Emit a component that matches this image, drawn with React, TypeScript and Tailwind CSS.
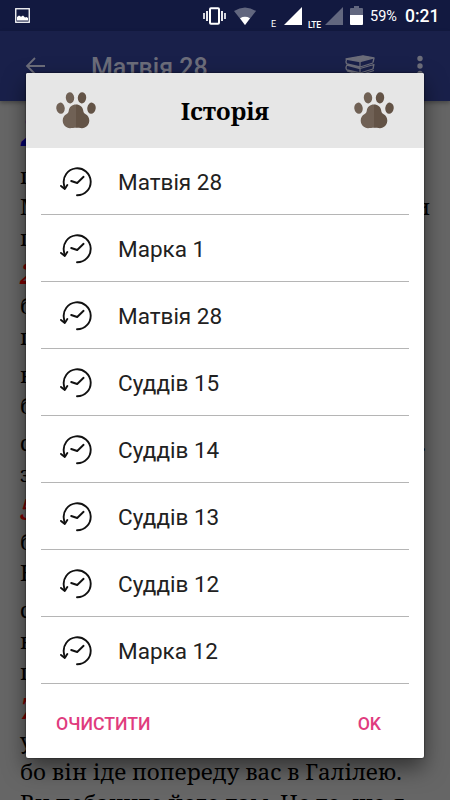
import { useState } from "react";

type Line = { text: string; end?: string; tone?: "red"; tall?: boolean };

const LINES: Line[] = [
  { text: "п" },
  { text: "М", end: "и" },
  { text: "п" },
  { text: "2", tone: "red", tall: true },
  { text: "б" },
  { text: "п" },
  { text: "в", tall: true },
  { text: "б" },
  { text: "с", end: ".", tall: true },
  { text: "з" },
  { text: "5", tone: "red", tall: true },
  { text: "б" },
  { text: "Н" },
  { text: "с", tall: true },
  { text: "в" },
  { text: "п" },
  { text: "7", tone: "red", tall: true },
  { text: "у" },
  { text: "бо він іде попереду вас в Галілею." },
  { text: "Ви побачите його там. Не то, що я" },
];

const HISTORY = [
  "Матвія 28",
  "Марка 1",
  "Матвія 28",
  "Суддів 15",
  "Суддів 14",
  "Суддів 13",
  "Суддів 12",
  "Марка 12",
];

function Paw() {
  return (
    <svg width="40" height="37" viewBox="0 0 40 37">
      <g fill="#706155">
        <ellipse cx="4.5" cy="16.2" rx="4.2" ry="5.6" transform="rotate(-8 4.5 16.2)" />
        <ellipse cx="14" cy="5.8" rx="4.2" ry="5.6" transform="rotate(-4 14 5.8)" />
        <path d="M20.200 12.500H20C16 12.500 13.300 15 12.800 18.500C12.500 20.500 12 21.300 10.300 22.200C8.200 23.400 6.700 25.700 6.700 28.600C6.700 33 10 36.200 14 36.200C16.400 36.200 17.800 35.800 20.200 35.800Z" />
      </g>
      <g fill="#635346">
        <ellipse cx="35.5" cy="16.2" rx="4.2" ry="5.6" transform="rotate(8 35.5 16.2)" />
        <ellipse cx="26" cy="5.8" rx="4.2" ry="5.6" transform="rotate(4 26 5.8)" />
        <path d="M20 12.500C24 12.500 26.700 15 27.200 18.500C27.500 20.500 28 21.300 29.700 22.200C31.800 23.400 33.300 25.700 33.300 28.600C33.300 33 30 36.200 26 36.200C23.600 36.200 22.200 35.800 20 35.800Z" />
      </g>
    </svg>
  );
}

function HistoryIcon() {
  return (
    <svg className="mt-px" width="32" height="30" viewBox="0 0 32 30" fill="none" stroke="#111" strokeWidth="1.9" strokeLinecap="round" strokeLinejoin="round">
      <path d="M17 28.300A13.500 13.500 0 1 0 3.900 17.200L4.600 21.400" />
      <path d="M1 18.900l3.800 3 2.500-3.900" />
      <path d="M11.200 14l6 2 6.400-6.200" />
    </svg>
  );
}

function StatusBar() {
  return (
    <div className="flex h-[31px] items-center bg-[#121940] text-white">
      <svg className="ml-[15px] shrink-0" width="15" height="15" viewBox="0 0 15 15">
        <rect x="0.75" y="0.75" width="13.5" height="13.5" fill="none" stroke="#fff" strokeWidth="1.3" />
        <path d="M2 12.500V9l2-1.500 2 1.200 2-1.200 2 2 1.500-.5 1.500 1v2.500z" fill="#fff" />
      </svg>
      <svg className="ml-[173px] shrink-0" width="23" height="18" viewBox="0 0 23 18" fill="none" stroke="#fff">
        <rect x="7" y="1.2" width="9" height="15.6" rx="1" strokeWidth="2" />
        <path d="M4 4v10M19 4v10" strokeWidth="1.8" />
        <path d="M1 6v6M22 6v6" strokeWidth="1.6" />
      </svg>
      <svg className="ml-[8px] shrink-0" width="22" height="18" viewBox="0 0 22 18">
        <path d="M0 4Q11-3 22 4L11 18z" fill="#62677f" />
        <path d="M6 11.200Q11 8.500 16 11.200L11 18z" fill="#fff" />
      </svg>
      <span className="ml-[15px] mt-[17px] w-[13px] text-[9px] leading-none">E</span>
      <svg className="shrink-0" width="18" height="18" viewBox="0 0 18 18">
        <path d="M18 0v18H0z" fill="#fff" />
      </svg>
      <span className="ml-[6px] mt-[19px] w-[17px] text-[8.5px] font-medium leading-none tracking-[-0.3px]">LTE</span>
      <svg className="shrink-0" width="18" height="18" viewBox="0 0 18 18">
        <path d="M18 0v18H0z" fill="#62677f" />
      </svg>
      <svg className="ml-[7px] shrink-0" width="13" height="19" viewBox="0 0 13 19">
        <path d="M4 0h5v2h3q1 0 1 1v6H0V3q0-1 1-1h3z" fill="#62677f" />
        <path d="M0 9h13v9q0 1-1 1H1q-1 0-1-1z" fill="#fff" />
      </svg>
      <span className="ml-[7px] mt-[3px] w-[28px] whitespace-nowrap text-[14.5px] leading-none">59%</span>
      <span className="ml-[7px] mt-[2px] whitespace-nowrap text-[17.5px] font-medium leading-none">0:21</span>
    </div>
  );
}

function Toolbar() {
  return (
    <div className="flex h-[70px] items-center bg-[#19204a] text-[#6c6d7a] shadow-[0_2px_4px_rgba(0,0,0,0.3)]">
      <svg className="ml-[25px] shrink-0" width="21" height="18" viewBox="0 0 21 18" fill="none" stroke="currentColor" strokeWidth="1.8">
        <path d="M20 9H2M10 1L2 9l8 8" />
      </svg>
      <span className="ml-[45px] mt-[3px] w-[254px] text-[25px] font-medium leading-none">Матвія 28</span>
      <svg className="shrink-0" width="30" height="22" viewBox="0 0 30 22" fill="none" stroke="currentColor" strokeWidth="1.3" strokeLinejoin="round">
        <path d="M1 4L18 .8l11 2L15 6.500z" fill="currentColor" />
        <path d="M2 4Q0 7 2 9l13 3 13-4M29 3l-1 4.500M15 6.500V12M2 10Q0 13 2 15l13 3 13-4M29 9l-1 5M2 10l13 3.500L29 9.500M15 13.500V18M2 16l13 4 14-4.500" />
      </svg>
      <svg className="ml-[42px] shrink-0" width="6" height="22" viewBox="0 0 6 22" fill="currentColor">
        <circle cx="3" cy="3.5" r="2.7" />
        <circle cx="3" cy="11" r="2.7" />
        <circle cx="3" cy="18.5" r="2.7" />
      </svg>
    </div>
  );
}

function Reader() {
  return (
    <div className="px-5 font-['Noto_Serif',serif] text-[22.4px] text-black">
      <div className="flex h-[59px] items-start pl-px pt-[4px] text-[41px] font-bold italic leading-[50px] text-[#00006c]">2</div>
      {LINES.map((line, i) => (
        <div
          key={i}
          className={`flex items-end justify-between whitespace-nowrap leading-[31px] ${line.tall ? "h-[37.3px]" : "h-[31px]"} ${line.tone === "red" ? "pb-[2px] text-[29px] font-bold italic text-[#7c0000]" : ""}`}
        >
          <span>{line.text}</span>
          {line.end && <span className={line.end === "." ? "pr-[4px]" : ""}>{line.end}</span>}
        </div>
      ))}
    </div>
  );
}

export default function App() {
  const [items, setItems] = useState(HISTORY);
  const [open, setOpen] = useState(true);

  return (
    <div className="relative h-[800px] w-[450px] overflow-hidden bg-[#666] font-['Roboto','Noto_Sans',sans-serif]">
      <StatusBar />
      <Toolbar />
      <Reader />

      {open && (
        <div className="absolute left-[26px] top-[73px] flex h-[685px] w-[398px] flex-col overflow-hidden rounded-[2px] bg-white shadow-[0_0_2px_rgba(0,0,0,0.8),0_10px_22px_rgba(0,0,0,0.5)]">
          <div className="flex h-[75px] shrink-0 items-center justify-between bg-[#e6e6e6] px-[30px]">
            <Paw />
            <h1 className="font-['Noto_Serif',serif] text-[24px] font-bold text-black">Історія</h1>
            <Paw />
          </div>
          <ul className="flex-1 px-[15px]">
            {items.map((item, i) => (
              <li key={i} className="flex h-[67px] items-center border-b border-[#b5b5b5] pl-[19px] text-[22.5px] text-[#212121]">
                <HistoryIcon />
                <span className="ml-[26px] pt-[3px]">{item}</span>
              </li>
            ))}
          </ul>
          <div className="flex h-[70px] shrink-0 items-center justify-between pl-[30px] pr-[43px] pt-[2px] text-[17.7px] font-medium text-[#e03c7e]">
            <button onClick={() => setItems([])}>ОЧИСТИТИ</button>
            <button onClick={() => setOpen(false)}>OK</button>
          </div>
        </div>
      )}
    </div>
  );
}
